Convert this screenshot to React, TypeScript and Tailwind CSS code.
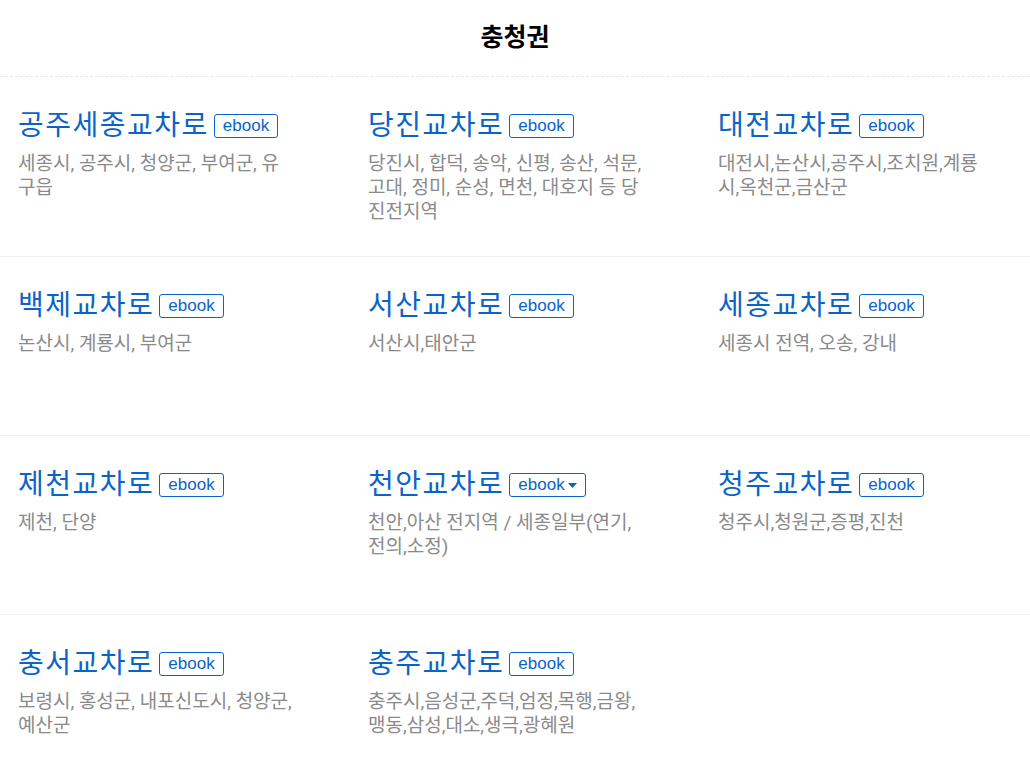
import React from 'react';

type Route = { name: string; area: string; menu?: boolean };

const rows: Route[][] = [
  [
    { name: '공주세종교차로', area: '세종시, 공주시, 청양군, 부여군, 유구읍' },
    { name: '당진교차로', area: '당진시, 합덕, 송악, 신평, 송산, 석문, 고대, 정미, 순성, 면천, 대호지 등 당진전지역' },
    { name: '대전교차로', area: '대전시,논산시,공주시,조치원,계룡시,옥천군,금산군' },
  ],
  [
    { name: '백제교차로', area: '논산시, 계룡시, 부여군' },
    { name: '서산교차로', area: '서산시,태안군' },
    { name: '세종교차로', area: '세종시 전역, 오송, 강내' },
  ],
  [
    { name: '제천교차로', area: '제천, 단양' },
    { name: '천안교차로', area: '천안,아산 전지역 / 세종일부(연기,전의,소정)', menu: true },
    { name: '청주교차로', area: '청주시,청원군,증평,진천' },
  ],
  [
    { name: '충서교차로', area: '보령시, 홍성군, 내포신도시, 청양군, 예산군' },
    { name: '충주교차로', area: '충주시,음성군,주덕,엄정,목행,금왕,맹동,삼성,대소,생극,광혜원' },
  ],
];

const font = { fontFamily: '"Liberation Sans", "Noto Sans CJK KR", sans-serif' };
const areaFont = { fontFamily: 'Roboto, "Noto Sans CJK KR", sans-serif' };

const Card = ({ route }: { route: Route }) => {
  return (
    <div className="w-[350px] px-[18px] pt-[31px]">
      <div className="flex items-center">
        <span className="text-[28px] leading-[36px] tracking-[1.5px] text-[#0a64c8]">{route.name}</span>
        <span className="ml-[5px] flex items-center rounded-[3px] border border-[#0a64c8] px-2 py-[1px] text-[17px] leading-[20px] text-[#0a64c8]">
          ebook
          {route.menu && (
            <svg width="9" height="5" viewBox="0 0 9 5" className="ml-[3px] mt-[1px]">
              <path d="M0 0h9L4.5 5z" fill="#0a64c8" />
            </svg>
          )}
        </span>
      </div>
      <p className="mt-[8px] w-[276px] text-[19px] leading-6 text-[#8a8a8a]" style={areaFont}>
        {route.area}
      </p>
    </div>
  );
};

export default function App() {
  return (
    <div className="min-h-screen w-full overflow-hidden bg-white" style={font}>
      <div className="h-[77px] flex items-center justify-center border-b border-dashed border-[#e6e6e6]">
        <h1 className="text-[25px] font-bold text-black">충청권</h1>
      </div>
      {rows.map((row, i) => (
        <div
          key={i}
          className={'flex h-[179px] w-[1050px] ' + (i > 0 ? 'border-t border-[#f0f0f0]' : '')}
        >
          {row.map((r) => (
            <Card key={r.name} route={r} />
          ))}
        </div>
      ))}
    </div>
  );
}
